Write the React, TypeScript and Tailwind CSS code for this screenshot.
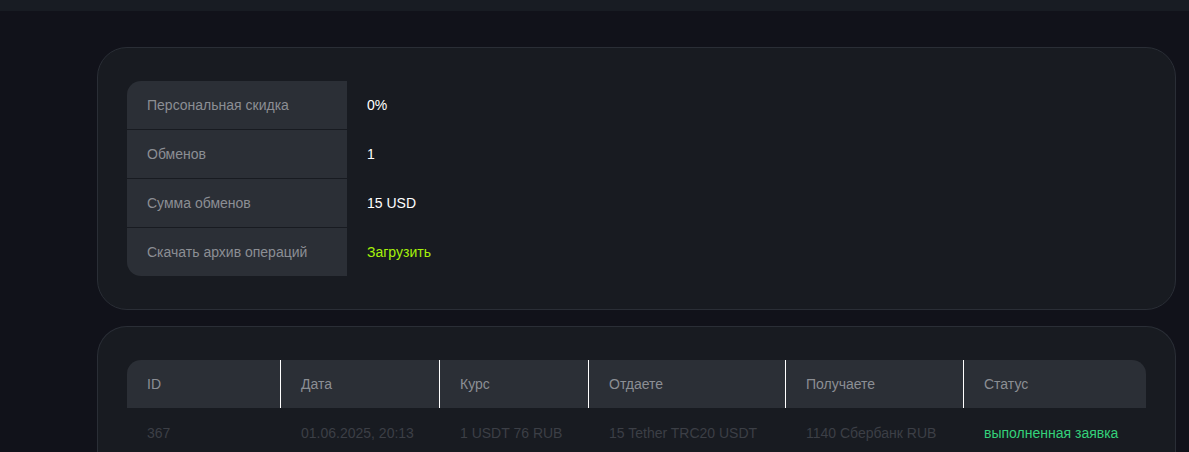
export default function App() {
  const stats = [
    { label: "Персональная скидка", value: "0%" },
    { label: "Обменов", value: "1" },
    { label: "Сумма обменов", value: "15 USD" },
    { label: "Скачать архив операций", value: "Загрузить", link: true },
  ];

  const cols = [
    { title: "ID", w: "w-[154px]" },
    { title: "Дата", w: "w-[159px]" },
    { title: "Курс", w: "w-[149px]" },
    { title: "Отдаете", w: "w-[197px]" },
    { title: "Получаете", w: "w-[178px]" },
    { title: "Статус", w: "flex-1" },
  ];

  const row = ["367", "01.06.2025, 20:13", "1 USDT 76 RUB", "15 Tether TRC20 USDT", "1140 Сбербанк RUB"];

  return (
    <div className="h-[452px] overflow-hidden bg-[#11121a] text-[14px] font-['Liberation_Sans',Arial,sans-serif]">
      <div className="h-[11px] bg-[#181c23]" />
      <div className="pl-[97px] pr-[13px] pt-[36px] flex flex-col gap-[16px]">
        <div className="rounded-[30px] border border-[#2a2e36] bg-[#181b21] px-[29px] pt-[33px] pb-[33px]">
          <div className="flex flex-col gap-px">
            {stats.map((s, i) => (
              <div key={s.label} className="flex h-[48px] items-center">
                <div
                  className={`w-[220px] h-full flex items-center pl-[20px] bg-[#2b2f36] text-[#8b8e94] ${
                    i === 0 ? "rounded-tl-[14px]" : ""
                  } ${i === stats.length - 1 ? "rounded-bl-[14px]" : ""}`}
                >
                  {s.label}
                </div>
                <div className={`pl-[20px] ${s.link ? "text-[#a6f20a]" : "text-white"}`}>{s.value}</div>
              </div>
            ))}
          </div>
        </div>

        <div className="rounded-t-[30px] border border-b-0 border-[#2a2e36] bg-[#181b21] px-[29px] pt-[33px] h-[200px]">
          <div className="flex h-[48px] bg-[#2b2f36] rounded-t-[14px]">
            {cols.map((c, i) => (
              <div
                key={c.title}
                className={`${c.w} h-full flex items-center pl-[20px] text-[#8b8e94] ${
                  i < cols.length - 1 ? "border-r border-white" : ""
                }`}
              >
                {c.title}
              </div>
            ))}
          </div>
          <div className="flex h-[50px] items-center">
            {row.map((v, i) => (
              <div key={i} className={`${cols[i].w} pl-[20px] text-[#3c3f46] border-r border-transparent`}>
                {v}
              </div>
            ))}
            <div className="flex-1 pl-[20px] text-[#34d17a]">выполненная заявка</div>
          </div>
        </div>
      </div>
    </div>
  );
}
